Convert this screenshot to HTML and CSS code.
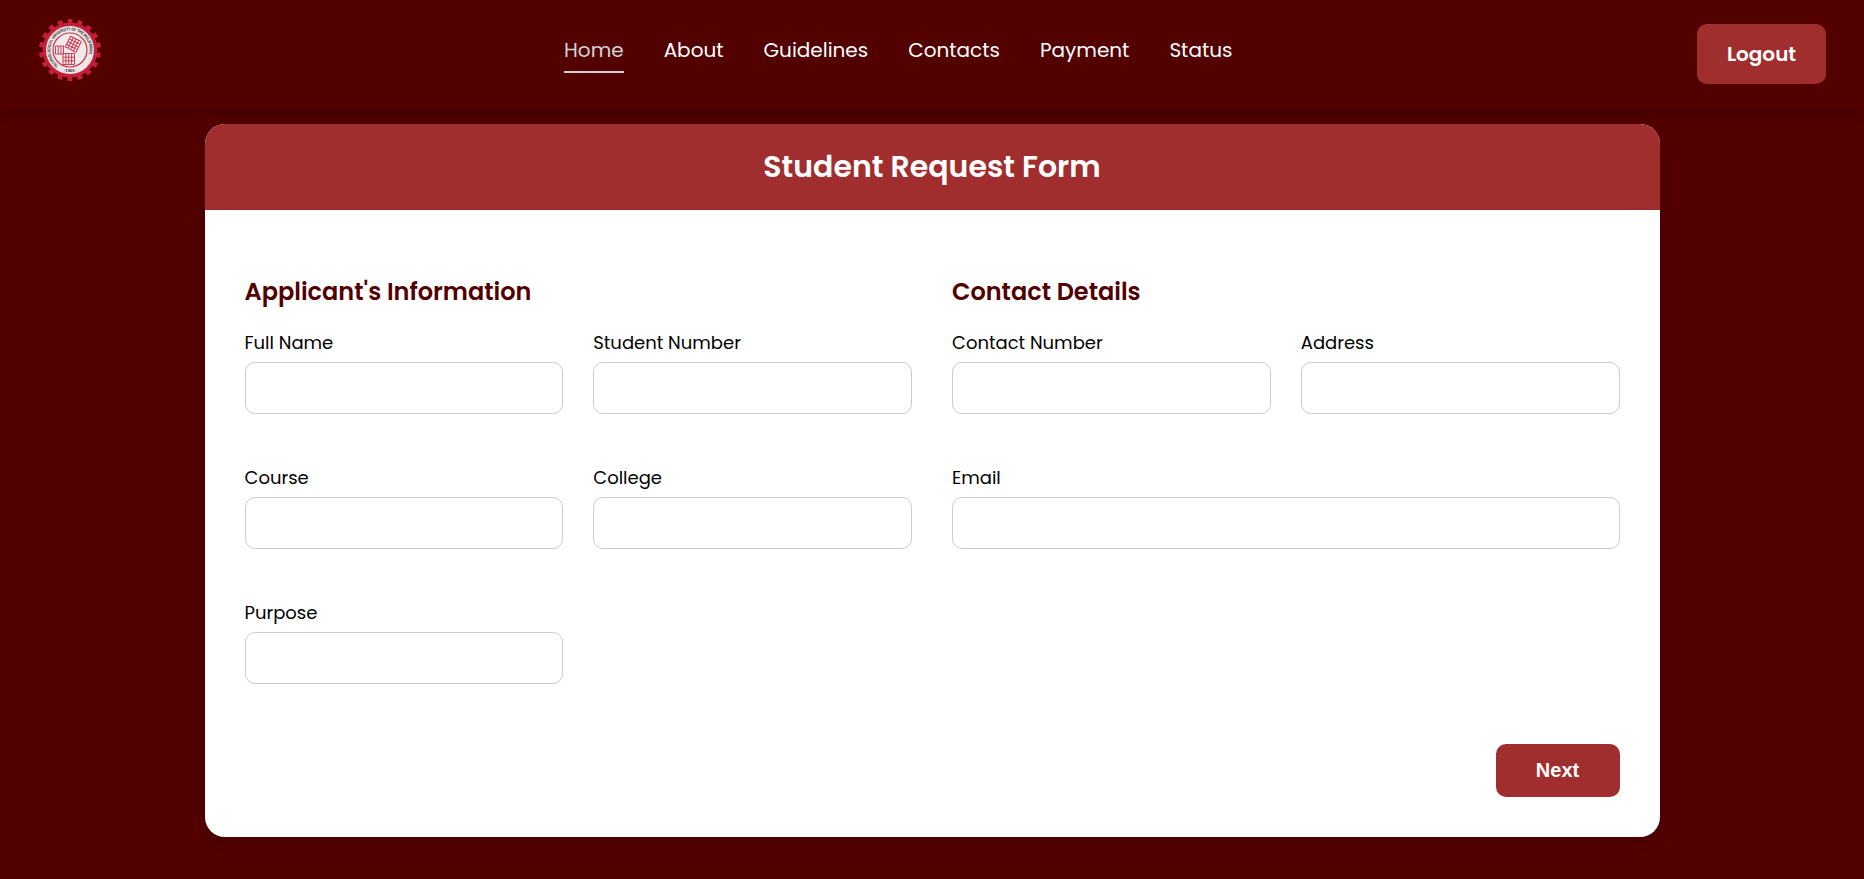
FILE: index.html
```html
<!DOCTYPE html>
<html lang="en">
<head>
<meta charset="utf-8">
<title>Student Request Form</title>
<link rel="stylesheet" href="styles.css">
</head>
<body>
<header class="navbar">
  <svg class="logo" viewBox="0 0 64 64" aria-label="University seal">
    <circle cx="32" cy="32" r="28.6" fill="none" stroke="#c41e3a" stroke-width="4.8" stroke-dasharray="4.9 5.083" stroke-dashoffset="2.45" transform="rotate(-90 32 32)"/>
    <circle cx="32" cy="32" r="27.5" fill="#c41e3a"/>
    <circle cx="32" cy="32" r="24" fill="#ece6e6"/>
    <circle cx="32" cy="32" r="17" fill="#f0e9e9" stroke="#c9354d" stroke-width="1.200"/>
    <path id="seal-arc" d="M20.2 47.7A19.6 19.6 0 1 1 43.8 47.7" fill="none"/>
    <text class="seal-text"><textPath href="#seal-arc" textLength="83" lengthAdjust="spacingAndGlyphs">TECHNOLOGICAL UNIVERSITY OF THE PHILIPPINES</textPath></text>
    <text class="seal-text" x="32" y="53.6" text-anchor="middle">·1901·</text>
    <g fill="none" stroke="#cc2d48" stroke-width=".9">
      <path d="M17.500 28h8v8h-8zM20.200 28v8M22.900 28v8M25 35.500h11.500v11H25zM27.900 35.500v11M30.700 35.500v11M33.600 35.500v11M25 39.200h11.500M25 42.800h11.500"/>
      <path transform="rotate(27 35.300 26.300)" d="M29.300 20.300h12v12h-12zM32.300 20.300v12M35.300 20.300v12M38.300 20.300v12M29.300 23.300h12M29.300 26.300h12M29.300 29.300h12"/>
    </g>
  </svg>
  <nav class="menu">
    <a class="link active">Home</a>
    <a class="link">About</a>
    <a class="link">Guidelines</a>
    <a class="link">Contacts</a>
    <a class="link">Payment</a>
    <a class="link">Status</a>
  </nav>
  <button class="logout">Logout</button>
</header>
<main class="card">
  <h1 class="card-title">Student Request Form</h1>
  <form class="form">
    <div class="columns">
      <section class="section">
        <h2 class="section-title">Applicant's Information</h2>
        <div class="fields">
          <label class="field"><span class="label">Full Name</span><input class="input" type="text"></label>
          <label class="field"><span class="label">Student Number</span><input class="input" type="text"></label>
          <label class="field"><span class="label">Course</span><input class="input" type="text"></label>
          <label class="field"><span class="label">College</span><input class="input" type="text"></label>
          <label class="field"><span class="label">Purpose</span><input class="input" type="text"></label>
        </div>
      </section>
      <section class="section">
        <h2 class="section-title">Contact Details</h2>
        <div class="fields">
          <label class="field"><span class="label">Contact Number</span><input class="input" type="text"></label>
          <label class="field"><span class="label">Address</span><input class="input" type="text"></label>
          <label class="field wide"><span class="label">Email</span><input class="input" type="text"></label>
        </div>
      </section>
    </div>
    <button class="next" type="button">Next</button>
  </form>
</main>
</body>
</html>
```
FILE: styles.css
```css
* { box-sizing: border-box; margin: 0; }
body {
  height: 879px;
  overflow: hidden;
  background: #520000;
  font-family: Poppins, Inter, sans-serif;
}
.navbar {
  height: 110px;
  display: grid;
  grid-template-columns: 526px 1fr 129px;
  align-items: start;
  padding: 0 38px;
  background: #520000;
  box-shadow: 0 4px 10px rgba(0, 0, 0, .2);
}
.logo { width: 64px; height: 64px; margin-top: 18px; }
.seal-text { font: bold 4.2px "Liberation Sans", sans-serif; fill: #222; }
.menu { display: flex; gap: 40px; padding-top: 34px; }
.link {
  height: 39px;
  line-height: 32px;
  font-size: 20px;
  color: #fff;
  white-space: nowrap;
  border-bottom: 2px solid transparent;
}
.active { color: #d3d3d3; border-color: #d3d3d3; }
.logout, .next {
  padding: 0;
  border: 0;
  border-radius: 10px;
  background: #a02e2e;
  color: #fff;
  font-size: 20px;
}
.logout {
  width: 129px;
  height: 60px;
  margin-top: 24px;
  font-family: inherit;
  font-weight: 600;
}
.card {
  width: 1455px;
  height: 713px;
  margin: 14px auto 0;
  overflow: hidden;
  border-radius: 20px;
  background: #fff;
  box-shadow: 0 4px 12px rgba(0, 0, 0, .15);
}
.card-title {
  height: 86px;
  line-height: 86px;
  background: #a02e2e;
  color: #fff;
  font-size: 30px;
  font-weight: 600;
  text-align: center;
}
.form { display: flex; flex-direction: column; padding: 62px 40px 40px; }
.columns { display: grid; grid-template-columns: 1fr 1fr; gap: 40px; }
.section-title {
  height: 36px;
  line-height: 40px;
  margin-bottom: 21px;
  color: #520000;
  font-size: 24px;
  font-weight: 600;
}
.fields { display: grid; grid-template-columns: 1fr 1fr; gap: 50px 30px; }
.field { display: flex; flex-direction: column; height: 85px; }
.wide { grid-column: 1 / -1; }
.label { height: 33px; line-height: 27px; font-size: 18px; color: #000; }
.input {
  width: 100%;
  height: 52px;
  padding: 0 15px;
  border: 1px solid #ccc;
  border-radius: 10px;
  background: #fff;
}
.next {
  align-self: flex-end;
  width: 124px;
  height: 53px;
  margin-top: 60px;
  font-family: "Liberation Sans", Arial, sans-serif;
  font-weight: bold;
}
```
